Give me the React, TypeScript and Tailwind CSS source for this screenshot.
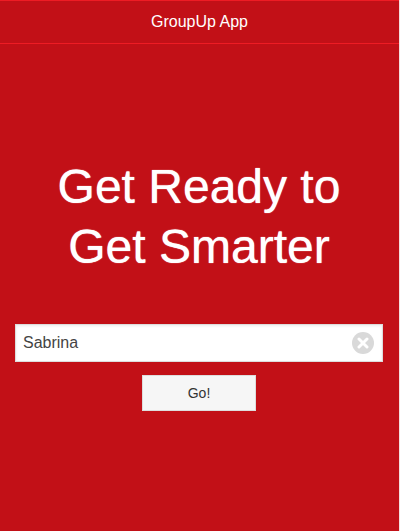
import { useState } from "react";

const App = () => {
  const [name, setName] = useState("Sabrina");

  return (
    <div
      className="flex min-h-[531px] w-[400px] bg-[#f3dede]"
      style={{ fontFamily: '"Liberation Sans", Arial, sans-serif' }}
    >
      <div className="flex w-[399px] flex-col bg-[#c21017]">
        <header className="flex h-[44px] items-center justify-center border-y border-[#ee1c24] text-[16px] text-white">
          GroupUp App
        </header>

        <main className="flex flex-col items-center pt-[113px] pr-[16px] pl-[15px]">
          <h1 className="text-center text-[48px] leading-[60px] text-white [text-shadow:0_0_1px_#fff]">
            Get Ready to
            <br />
            Get Smarter
          </h1>

          <div className="mt-[47px] flex h-[38px] w-full items-center border border-[#dddddd] bg-white pr-[8px] pl-[7px] shadow-[inset_0_1px_3px_rgba(0,0,0,0.08)]">
            <input
              value={name}
              onChange={(e) => setName(e.target.value)}
              className="min-w-0 flex-1 bg-transparent text-[16px] text-[#444] outline-none"
              style={{ fontFamily: '"Liberation Sans", Arial, sans-serif' }}
            />
            <button
              onClick={() => setName("")}
              className="flex h-[22px] w-[22px] items-center justify-center rounded-full bg-[#d9d9d9]"
            >
              <svg width="12" height="12" viewBox="0 0 12 12">
                <path
                  d="M2 2 L10 10 M10 2 L2 10"
                  stroke="white"
                  strokeWidth="3"
                  strokeLinecap="round"
                />
              </svg>
            </button>
          </div>

          <button className="mt-[13px] h-[36px] w-[114px] border border-[#dddddd] bg-[#f6f6f6] text-[14px] text-[#333]">
            Go!
          </button>
        </main>
      </div>
    </div>
  );
};

export default App;
